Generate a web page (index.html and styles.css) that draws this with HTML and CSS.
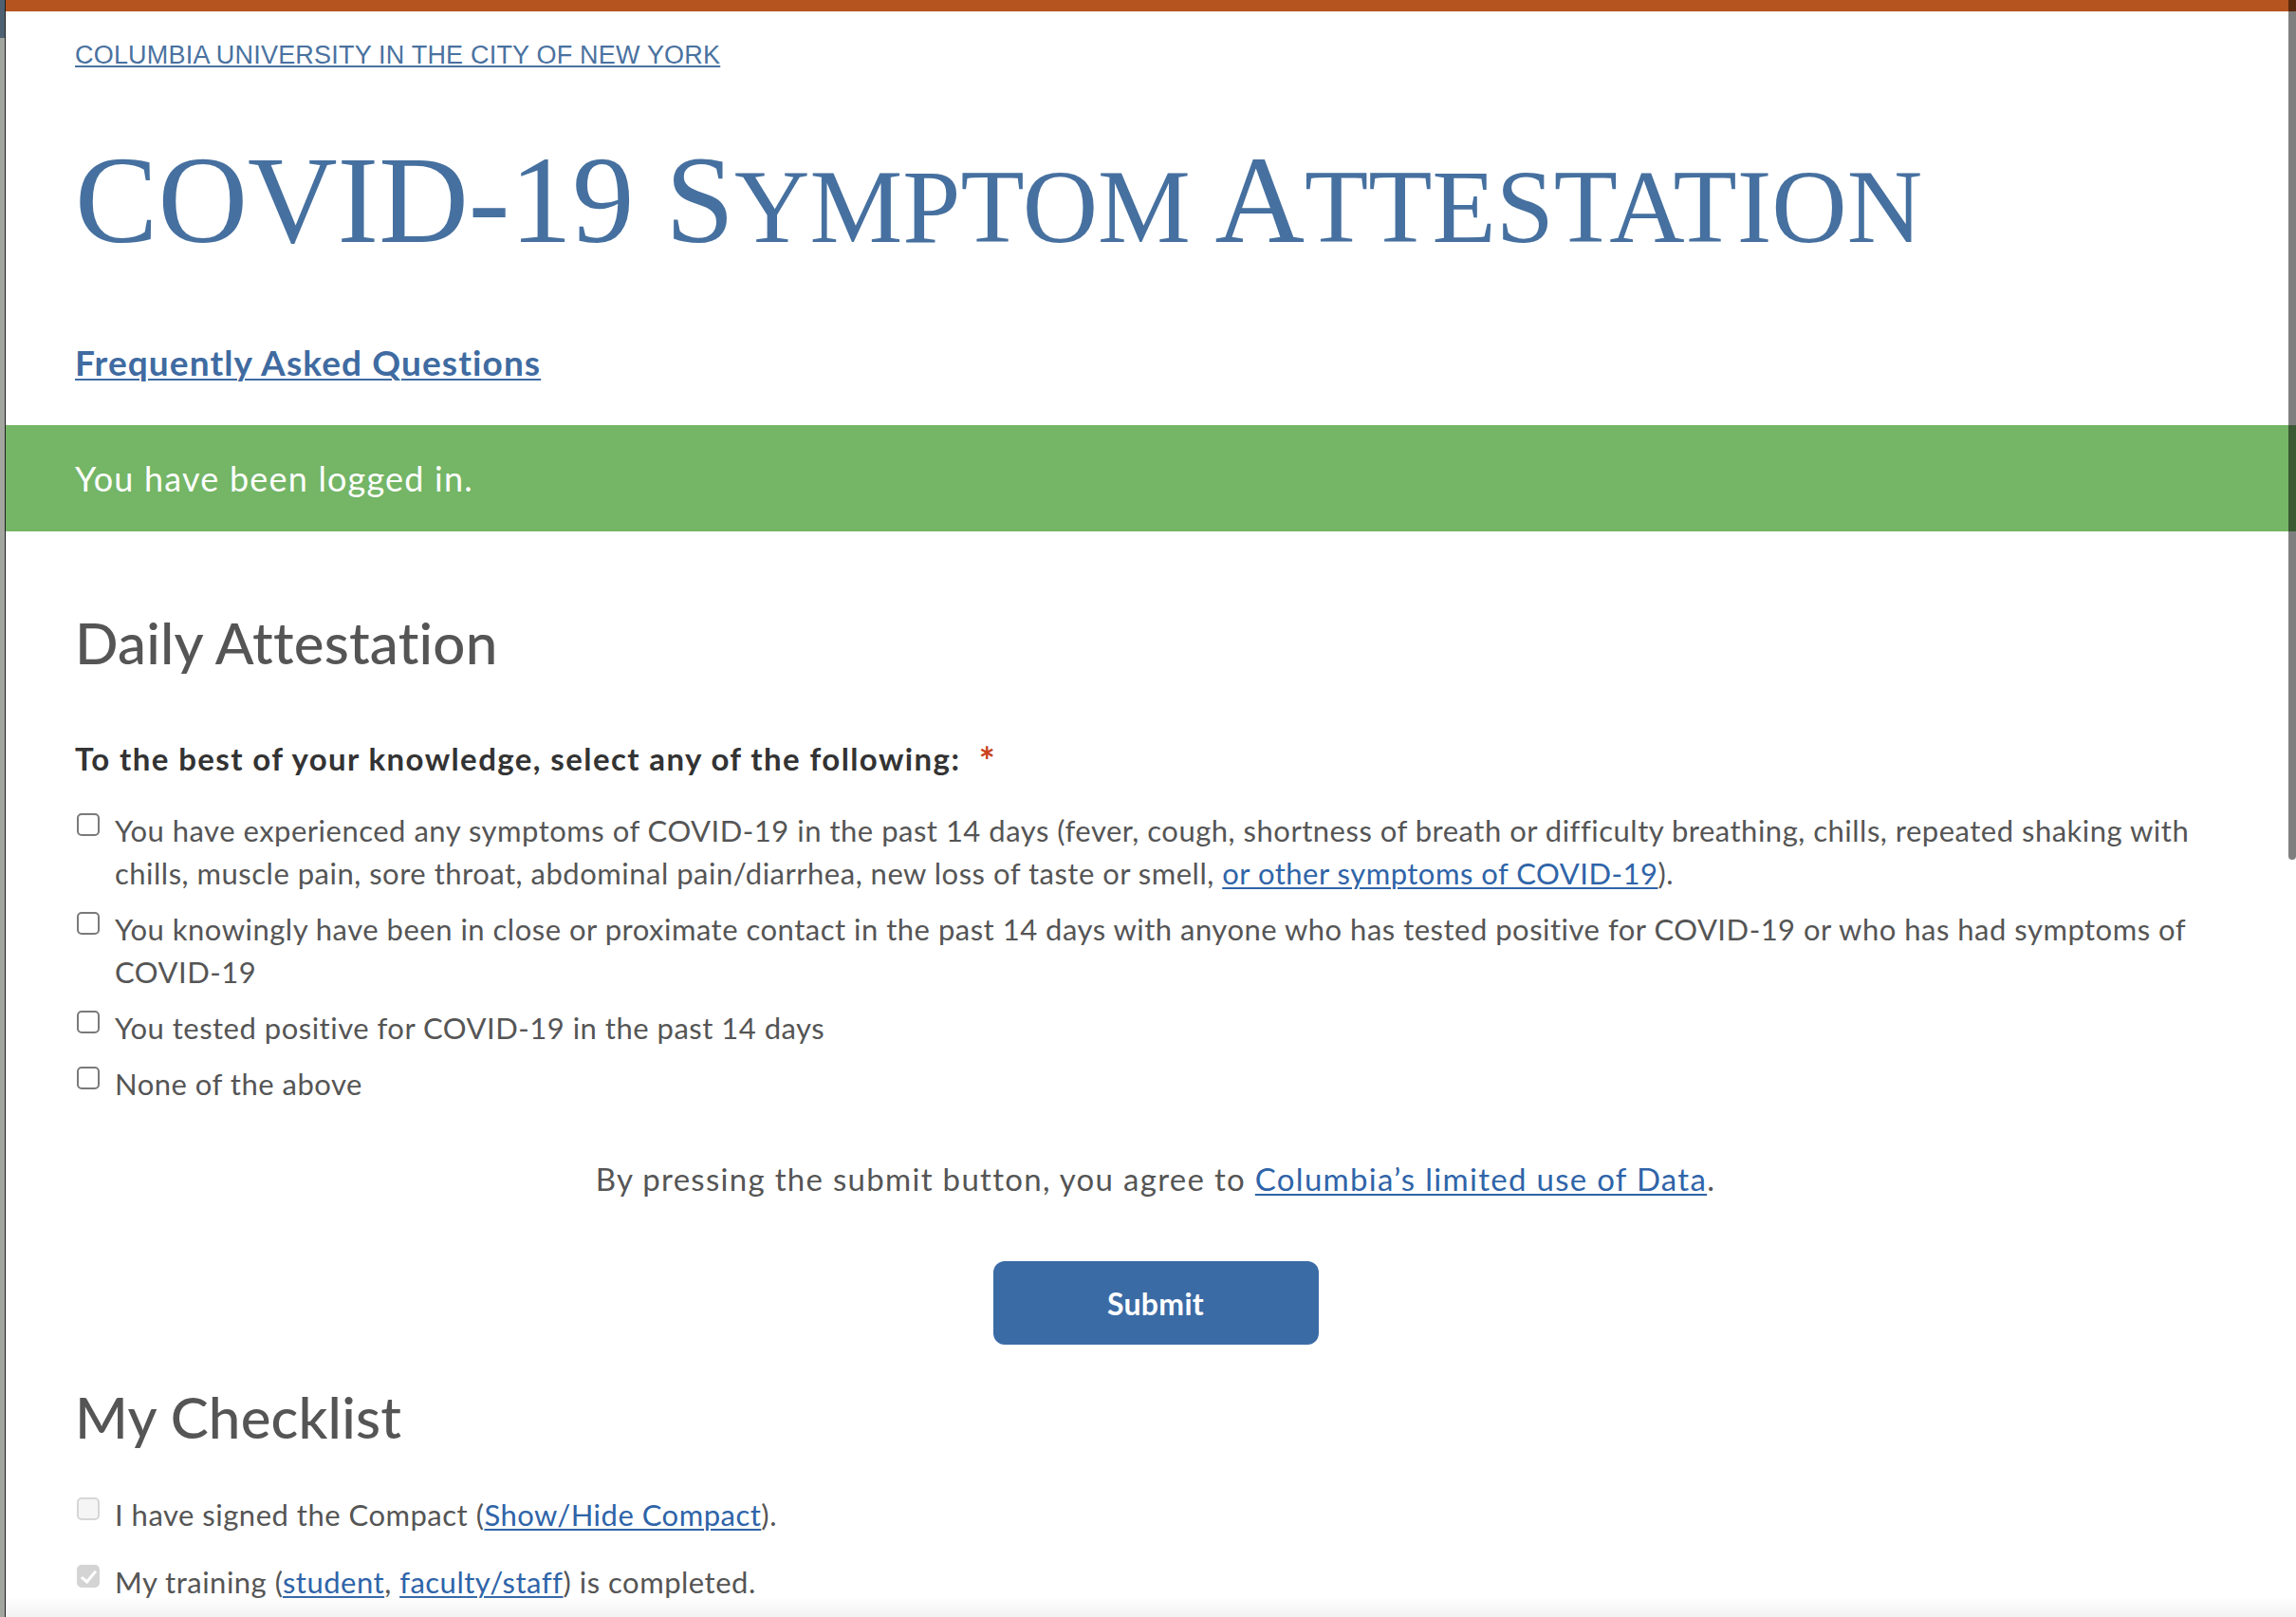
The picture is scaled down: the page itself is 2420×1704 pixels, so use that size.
FILE: index.html
```html
<!DOCTYPE html>
<html lang="en">
<head>
<meta charset="utf-8">
<title>COVID-19 Symptom Attestation</title>
<link rel="stylesheet" href="styles.css">
</head>
<body>
<div class="desktop">
  <div class="behind"></div>
  <div class="window">
    <div class="topbar"></div>
    <header class="masthead">
      <div class="univ-line"><a href="#" class="univ">COLUMBIA UNIVERSITY IN THE CITY OF NEW YORK</a></div>
      <h1 class="title">COVID-19 S<span class="sc">YMPTOM</span> A<span class="sc">TTESTATION</span></h1>
      <div class="faq-line"><a href="#" class="faq">Frequently Asked Questions</a></div>
    </header>
    <div class="alert">You have been logged in.</div>
    <main class="content">
      <h2 class="section-title">Daily Attestation</h2>
      <div class="question">To the best of your knowledge, select any of the following: <span class="req">*</span></div>
      <ul class="options">
        <li class="option"><input type="checkbox" class="box"><label class="option-text">You have experienced any symptoms of COVID-19 in the past 14 days (fever, cough, shortness of breath or difficulty breathing, chills, repeated shaking with chills, muscle pain, sore throat, abdominal pain/diarrhea, new loss of taste or smell, <a href="#">or other symptoms of COVID-19</a>).</label></li>
        <li class="option"><input type="checkbox" class="box"><label class="option-text">You knowingly have been in close or proximate contact in the past 14 days with anyone who has tested positive for COVID-19 or who has had symptoms of COVID-19</label></li>
        <li class="option"><input type="checkbox" class="box"><label class="option-text">You tested positive for COVID-19 in the past 14 days</label></li>
        <li class="option"><input type="checkbox" class="box"><label class="option-text">None of the above</label></li>
      </ul>
      <p class="agree">By pressing the submit button, you agree to <a href="#">Columbia’s limited use of Data</a>.</p>
      <div class="actions"><button type="button" class="submit">Submit</button></div>
      <h2 class="section-title checklist-title">My Checklist</h2>
      <ul class="checklist">
        <li class="option"><input type="checkbox" class="box" disabled><label class="option-text">I have signed the Compact (<a href="#">Show/Hide Compact</a>).</label></li>
        <li class="option"><input type="checkbox" class="box" disabled checked><label class="option-text">My training (<a href="#">student</a>, <a href="#">faculty/staff</a>) is completed.</label></li>
      </ul>
    </main>
  </div>
</div>
<div class="scrollbar"></div>
<div class="fade"></div>
</body>
</html>
```
FILE: styles.css
```css
* { box-sizing: border-box; }
html, body { margin: 0; padding: 0; }
body {
  font-family: Lato, "Noto Sans", sans-serif;
  color: #555;
  background: #fff;
  overflow: hidden;
}
a { color: #2f64a8; text-decoration: underline; text-underline-offset: 3px; text-decoration-thickness: 2px; }

.desktop { display: flex; min-height: 1704px; }
.behind { width: 5px; flex: none; background: linear-gradient(#4d6172 0 40px, #a2a69f 40px); }
.window { flex: 1; border-left: 1px solid #1e1e1e; background: #fff; min-height: 1704px; }

.topbar { height: 12px; background: #b5541f; }

.masthead { padding: 0 63px 0 73px; }
.univ-line { margin-top: 31px; font: 400 27px/30px "Liberation Sans", Arial, sans-serif; letter-spacing: 0.2px; }
.univ { color: #4a72a0; text-underline-offset: 2px; }

.title {
  margin: 63px 0 0;
  font: 400 131px/150px "Liberation Serif", "Times New Roman", serif;
  color: #46709f;
  white-space: nowrap;
}
.title .sc { font-size: 110px; line-height: 1; }

.faq-line { margin-top: 74px; font: 700 37px/44px Lato, sans-serif; letter-spacing: 1.1px; }
.faq { color: #3f6ba1; }

.alert {
  margin-top: 44px;
  height: 112px;
  padding-left: 73px;
  background: #74b566;
  color: #fff;
  font: 400 36px/112px Lato, sans-serif;
  letter-spacing: 1.2px;
}

.content { padding: 0 63px 0 73px; }

.section-title {
  margin: 82px 0 0;
  font: 500 60px/70px Lato, sans-serif;
  letter-spacing: 0.2px;
  color: #555;
}
.checklist-title { margin-top: 41px; }

.question {
  margin-top: 65px;
  font: 700 33px/45px Lato, sans-serif;
  letter-spacing: 1.4px;
  color: #333;
}
.req { color: #c9411b; margin-left: 10px; font-size: 40px; line-height: 30px; vertical-align: -5px; }

.options, .checklist {
  list-style: none;
  margin: 31px 0 0;
  padding: 0;
  display: flex;
  flex-direction: column;
  gap: 14px;
}
.checklist { margin-top: 46px; gap: 26px; }

.option {
  display: flex;
  align-items: flex-start;
  gap: 16px;
  font: 400 31px/45px Lato, sans-serif;
  letter-spacing: 0.5px;
  color: #555;
}

.box {
  appearance: none;
  -webkit-appearance: none;
  flex: none;
  width: 24px;
  height: 24px;
  margin: 4px 0 0 2px;
  border: 2px solid #7a7a7a;
  border-radius: 5px;
  background: #fff;
  position: relative;
}
.box:disabled { border-color: #d6d6d6; background: #f5f5f5; }
.box:disabled:checked { background: #d4d4d4; border-color: #d4d4d4; }
.box:checked::after {
  content: "";
  position: absolute;
  left: 6px;
  top: 1px;
  width: 6px;
  height: 13px;
  border-right: 3px solid #fff;
  border-bottom: 3px solid #fff;
  transform: rotate(40deg);
}

.agree {
  margin: 55px 0 0;
  text-align: center;
  font: 400 33px/45px Lato, sans-serif;
  letter-spacing: 1.3px;
  color: #555;
}

.actions { margin-top: 64px; display: flex; justify-content: center; }
.submit {
  width: 343px;
  height: 88px;
  border: none;
  border-radius: 12px;
  background: #3b6ba5;
  color: #fff;
  font: 700 32px Lato, sans-serif;
  letter-spacing: 0.3px;
}

.scrollbar {
  position: fixed;
  top: 0;
  right: 0;
  width: 8px;
  height: 906px;
  background: rgba(0, 0, 0, 0.5);
  border-radius: 0 0 5px 5px;
}
.fade {
  position: fixed;
  left: 6px;
  right: 0;
  bottom: 0;
  height: 22px;
  background: linear-gradient(rgba(244, 244, 244, 0), #f2f2f2);
}
```
